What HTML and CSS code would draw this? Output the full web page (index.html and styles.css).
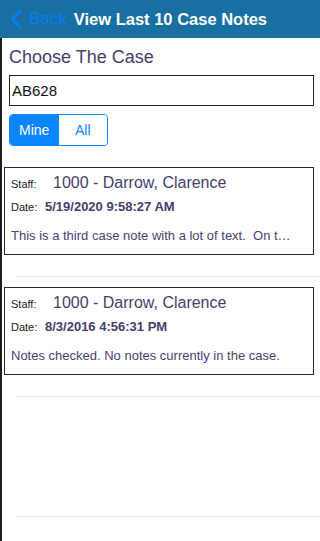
FILE: index.html
```html
<!DOCTYPE html>
<html lang="en">
<head>
    <meta charset="UTF-8">
    <meta name="viewport" content="width=device-width, initial-scale=1.0">
    <title>View Last 10 Case Notes</title>
    <link rel="stylesheet" href="styles.css">
</head>
<body>
    <div class="nav-bar">
        <a class="back" href="#">
            <svg class="chevron" width="12" height="20" viewBox="0 0 12 20">
                <path d="M10 2 L2.5 10 L10 18" fill="none" stroke="#0a7cf2" stroke-width="2.6" stroke-linecap="round" stroke-linejoin="round"/>
            </svg>
            <span>Back</span>
        </a>
        <span class="title">View Last 10 Case Notes</span>
    </div>

    <div class="page">
        <div class="prompt">Choose The Case</div>
        <input class="case-input" type="text" value="AB628">

        <div class="segment">
            <button class="seg active">Mine</button>
            <button class="seg">All</button>
        </div>

        <ul class="notes">
            <li class="row">
                <div class="card">
                    <div class="line">
                        <span class="label">Staff:</span>
                        <span class="staff">1000 - Darrow, Clarence</span>
                    </div>
                    <div class="line">
                        <span class="label">Date:</span>
                        <span class="date">5/19/2020 9:58:27 AM</span>
                    </div>
                    <div class="text">This is a third case note with a lot of text.&nbsp; On t…</div>
                </div>
            </li>
            <li class="row">
                <div class="card">
                    <div class="line">
                        <span class="label">Staff:</span>
                        <span class="staff">1000 - Darrow, Clarence</span>
                    </div>
                    <div class="line">
                        <span class="label">Date:</span>
                        <span class="date">8/3/2016 4:56:31 PM</span>
                    </div>
                    <div class="text">Notes checked. No notes currently in the case.</div>
                </div>
            </li>
            <li class="row"></li>
        </ul>
    </div>
</body>
</html>
```

FILE: styles.css
```css
body {
    font-family: "Liberation Sans", Arial, sans-serif;
    margin: 0;
    background: #fff;
    color: #222;
    width: 320px;
    height: 541px;
    overflow: hidden;
}
.nav-bar {
    height: 38px;
    background-color: #1770a1;
    display: flex;
    align-items: center;
    padding-left: 10px;
    box-sizing: border-box;
}
.back {
    display: flex;
    align-items: center;
    text-decoration: none;
    color: #0a7cf2;
    font-size: 17px;
}
.chevron {
    margin-right: 7px;
}
.title {
    color: #fff;
    font-weight: bold;
    font-size: 16.5px;
    margin-left: 7px;
}
.page {
    border-left: 2px solid #1c1c1c;
    height: 503px;
    box-sizing: border-box;
    padding-top: 8px;
}
.prompt {
    font-size: 18px;
    color: #463e6b;
    margin-left: 7px;
    height: 22px;
    line-height: 22px;
}
.case-input {
    display: block;
    box-sizing: border-box;
    margin: 7px 0 0 7px;
    width: 305px;
    height: 31px;
    border: 1px solid #222;
    font-family: inherit;
    font-size: 15px;
    color: #111;
    padding: 0 2px;
    outline: none;
}
.segment {
    display: flex;
    margin: 8px 0 0 7px;
    width: 99px;
    height: 32px;
    border: 1px solid #0a84ff;
    border-radius: 4px;
    overflow: hidden;
    box-sizing: border-box;
}
.seg {
    flex: 1;
    border: none;
    background: #fff;
    color: #0a84ff;
    font-family: inherit;
    font-size: 14px;
    padding: 0;
}
.seg.active {
    background: #0a84ff;
    color: #fff;
}
.notes {
    list-style: none;
    margin: 11px 0 0 0;
    padding: 0;
}
.row {
    height: 120px;
    box-sizing: border-box;
    padding: 10px 0 0 2px;
    position: relative;
}
.row::after {
    content: "";
    position: absolute;
    left: 14px;
    right: 0;
    bottom: 0;
    height: 1px;
    background: #e4e4e4;
}
.card {
    width: 310px;
    box-sizing: border-box;
    border: 1.5px solid #2a2a2a;
    padding: 6px 8px 11px 6px;
}
.line {
    display: flex;
    align-items: baseline;
}
.line + .line {
    margin-top: 7px;
}
.label {
    font-size: 11px;
    color: #222;
    width: 34px;
}
.staff {
    font-size: 16px;
    color: #463e6b;
    margin-left: 8px;
}
.date {
    font-size: 13px;
    font-weight: bold;
    color: #463e6b;
}
.text {
    margin-top: 14px;
    font-size: 13px;
    color: #4a4270;
    white-space: nowrap;
}
```
